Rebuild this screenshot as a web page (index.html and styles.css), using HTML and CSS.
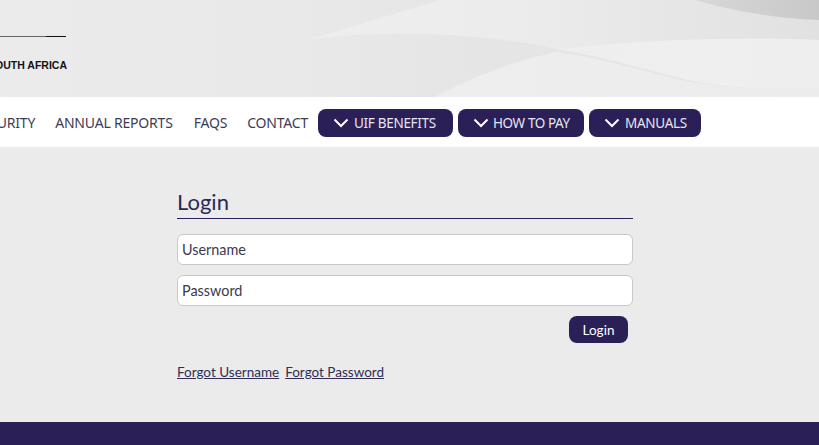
FILE: index.html
```html
<!DOCTYPE html>
<html lang="en">
<head>
<meta charset="utf-8">
<title>Login</title>
<link rel="stylesheet" href="styles.css">
</head>
<body>
<header class="banner">
  <svg class="waves" viewBox="0 0 819 97" preserveAspectRatio="none" aria-hidden="true">
    <defs>
      <linearGradient id="base" x1="0" x2="1" y1="0" y2="0">
        <stop offset="0" stop-color="#ebebeb"/>
        <stop offset="0.35" stop-color="#e9e9e9"/>
        <stop offset="0.6" stop-color="#e5e5e5"/>
        <stop offset="1" stop-color="#e7e7e7"/>
      </linearGradient>
      <linearGradient id="top" x1="0" x2="1" y1="0" y2="0">
        <stop offset="0" stop-color="#eeeeee"/>
        <stop offset="0.4" stop-color="#ececec"/>
        <stop offset="1" stop-color="#e1e1e1"/>
      </linearGradient>
      <linearGradient id="low" x1="0" x2="1" y1="0" y2="0">
        <stop offset="0" stop-color="#eeeeee"/>
        <stop offset="1" stop-color="#ececec"/>
      </linearGradient>
      <linearGradient id="band" x1="0" x2="1" y1="0" y2="0">
        <stop offset="0" stop-color="#eeeeee"/>
        <stop offset="0.5" stop-color="#efefef"/>
        <stop offset="1" stop-color="#eeeeee"/>
      </linearGradient>
      <linearGradient id="dark" x1="0" x2="1" y1="0" y2="0">
        <stop offset="0" stop-color="#d8d8d8"/>
        <stop offset="1" stop-color="#c8c8c8"/>
      </linearGradient>
    </defs>
    <rect width="819" height="97" fill="url(#base)"/>
    <path d="M312 39C360 24 400 12 440 0H819V40C740 36 640 40 556 49C500 36 400 28 312 39Z" fill="url(#top)"/>
    <path d="M435 97C470 78 510 62 556 52C600 58 640 70 680 80C730 90 780 90 819 88V97Z" fill="url(#low)"/>
    <path d="M556 49C640 40 740 36 819 40V88C780 90 730 90 680 78C640 68 600 56 556 49Z" fill="url(#band)"/>
    <path d="M695 0C730 10 770 18 819 20V0Z" fill="url(#dark)"/>
  </svg>
  <div class="logo">
    <span class="logo-rule"></span>
    <span class="logo-text">THE REPUBLIC OF SOUTH AFRICA</span>
  </div>
</header>
<nav class="nav">
  <a class="nav-link" href="#">SECURITY</a>
  <a class="nav-link nav-link-wide" href="#">ANNUAL REPORTS</a>
  <a class="nav-link" href="#">FAQS</a>
  <a class="nav-link nav-link-last" href="#">CONTACT</a>
  <div class="pills">
    <a class="pill pill-benefits" href="#"><svg class="chev" viewBox="0 0 16 10" aria-hidden="true"><path d="M1.5 1.5L8 8l6.5-6.5"/></svg>UIF BENEFITS</a>
    <a class="pill pill-pay" href="#"><svg class="chev" viewBox="0 0 16 10" aria-hidden="true"><path d="M1.5 1.5L8 8l6.5-6.5"/></svg>HOW TO PAY</a>
    <a class="pill pill-manuals" href="#"><svg class="chev" viewBox="0 0 16 10" aria-hidden="true"><path d="M1.5 1.5L8 8l6.5-6.5"/></svg>MANUALS</a>
  </div>
</nav>
<main class="main">
  <form class="login">
    <h1 class="title">Login</h1>
    <input class="field" type="text" placeholder="Username">
    <input class="field" type="password" placeholder="Password">
    <div class="actions"><button class="submit" type="button">Login</button></div>
    <div class="links">
      <a href="#">Forgot Username</a>
      <a href="#">Forgot Password</a>
    </div>
  </form>
</main>
<footer class="footer"></footer>
</body>
</html>
```
FILE: styles.css
```css
* { box-sizing: border-box; }
html, body { margin: 0; height: 445px; overflow: hidden; }
body {
  display: flex;
  flex-direction: column;
  font-family: Lato, "Noto Sans", sans-serif;
  background: #ebebeb;
  color: #2a2a4a;
}
.banner { position: relative; height: 97px; flex: none; overflow: hidden; }
.waves { position: absolute; inset: 0; width: 100%; height: 100%; display: block; }
.logo {
  position: absolute;
  top: 36px;
  left: 0;
  width: 67px;
  height: 36px;
  overflow: hidden;
  display: flex;
  flex-direction: column;
  align-items: flex-end;
}
.logo-rule {
  display: block;
  flex: none;
  width: 66px;
  height: 1px;
  margin-right: 1px;
  background: linear-gradient(to right, #666 0 46px, #111 46px);
}
.logo-text {
  margin-top: 23px;
  font: 700 10.5px/11px "Liberation Sans", Arial, sans-serif;
  color: #111;
  white-space: nowrap;
}
.nav {
  height: 50px;
  flex: none;
  background: #fff;
  display: flex;
  align-items: center;
  justify-content: flex-end;
  padding-right: 118px;
  overflow: hidden;
  white-space: nowrap;
}
.nav-link {
  flex: none;
  margin-right: 20px;
  font: 14px "Noto Sans", sans-serif;
  letter-spacing: -0.2px;
  color: #3c3c56;
  text-decoration: none;
}
.nav-link-wide { margin-right: 21px; }
.nav-link-last { margin-right: 10px; }
.pills { display: flex; gap: 5px; flex: none; margin-top: 2px; }
.pill {
  height: 28px;
  padding-left: 15px;
  display: flex;
  align-items: center;
  gap: 5px;
  border-radius: 8px;
  background: #2a1f57;
  color: #e6e6f0;
  font: 13.5px "Noto Sans", sans-serif;
  letter-spacing: -0.3px;
  text-decoration: none;
}
.pill-benefits { width: 135px; }
.pill-pay { width: 126px; gap: 4px; letter-spacing: -0.4px; }
.pill-manuals { width: 112px; }
.chev { width: 16px; height: 10px; fill: none; stroke: #fff; stroke-width: 2; flex: none; }
.main { flex: 1; display: flex; padding: 41px 0 0 177px; }
.login { width: 456px; }
.title {
  margin: 0 0 15px;
  height: 31px;
  font-size: 22px;
  line-height: 28px;
  font-weight: 400;
  color: #2a2a55;
  border-bottom: 1px solid #2a1f57;
}
.field {
  display: block;
  width: 100%;
  height: 31px;
  margin-bottom: 10px;
  padding: 0 4px 1px;
  border: 1px solid #c8c8c8;
  border-radius: 6px;
  background: #fff;
  font: 14.4px Lato, sans-serif;
  outline: none;
}
.field::placeholder { color: #3a3a50; opacity: 1; }
.actions { display: flex; justify-content: flex-end; padding-right: 5px; }
.submit {
  width: 59px;
  height: 27px;
  padding: 0;
  border: 0;
  border-radius: 8px;
  background: #2a1f57;
  color: #fff;
  font: 13.5px Lato, sans-serif;
}
.links { display: flex; gap: 6px; margin-top: 20px; font-size: 13.5px; line-height: 18px; }
.links a { color: #2f2f55; }
.footer { height: 23px; flex: none; background: #2a1f57; }
```
